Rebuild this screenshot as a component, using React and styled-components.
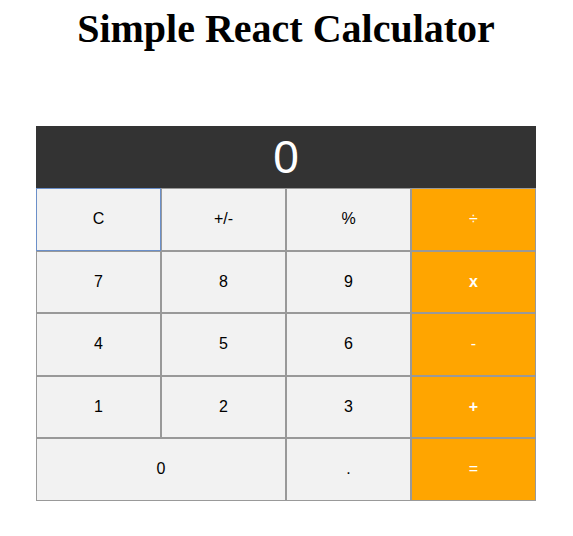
import React, { useState } from 'react'
import styled, { createGlobalStyle } from 'styled-components'

const GlobalStyle = createGlobalStyle`
  body {
    margin: 0;
    background: #fff;
  }
`

const Page = styled.div`
  display: flex;
  flex-direction: column;
  align-items: center;
  padding-right: 1px;
`

const Title = styled.h1`
  font-family: 'Liberation Serif', 'Times New Roman', serif;
  font-weight: bold;
  font-size: 40px;
  margin: 5px 0 74px;
  color: #000;
`

const Calculator = styled.div`
  width: 500px;
`

const Display = styled.div`
  height: 62px;
  background: #333;
  color: #fff;
  font-family: 'Liberation Sans', Arial, sans-serif;
  font-size: 46px;
  display: flex;
  align-items: center;
  justify-content: center;
`

const Keypad = styled.div`
  display: grid;
  grid-template-columns: repeat(4, 125px);
  grid-auto-rows: 62.5px;
`

const Key = styled.button`
  grid-column: span ${p => p.$span || 1};
  box-sizing: border-box;
  border: 1px solid ${p => (p.$focused ? '#6b8fc9' : '#999')};
  background: ${p => (p.$operator ? '#ffa500' : '#f2f2f2')};
  color: ${p => (p.$operator ? '#fff' : '#000')};
  font-family: 'Liberation Sans', Arial, sans-serif;
  font-size: 16px;
  font-weight: ${p => (p.$bold ? 'bold' : 'normal')};
  padding: 0;
  margin: 0;
  cursor: pointer;
  outline: none;
`

const keys = [
  { label: 'C', focused: true },
  { label: '+/-' },
  { label: '%' },
  { label: '÷', operator: true },
  { label: '7' },
  { label: '8' },
  { label: '9' },
  { label: 'x', operator: true, bold: true },
  { label: '4' },
  { label: '5' },
  { label: '6' },
  { label: '-', operator: true },
  { label: '1' },
  { label: '2' },
  { label: '3' },
  { label: '+', operator: true, bold: true },
  { label: '0', span: 2 },
  { label: '.' },
  { label: '=', operator: true },
]

const App = () => {
  const [value] = useState('0')

  return (
    <Page>
      <GlobalStyle />
      <Title>Simple React Calculator</Title>
      <Calculator>
        <Display>{value}</Display>
        <Keypad>
          {keys.map(k => (
            <Key
              key={k.label}
              $span={k.span}
              $operator={k.operator}
              $focused={k.focused}
              $bold={k.bold}
            >
              {k.label}
            </Key>
          ))}
        </Keypad>
      </Calculator>
    </Page>
  )
}

export default App
